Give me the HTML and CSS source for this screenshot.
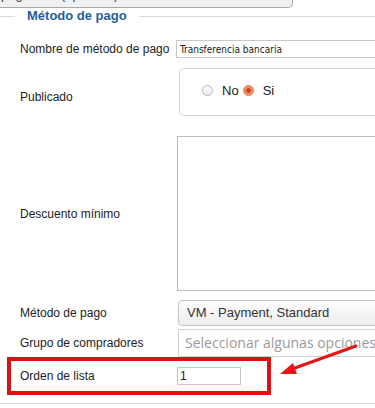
FILE: index.html
```html
<!DOCTYPE html>
<html lang="es">

<head>
    <meta charset="UTF-8">
    <meta name="viewport" content="width=device-width, initial-scale=1.0">
    <title>Método de pago</title>
    <link rel="stylesheet" href="styles.css">
</head>

<body>
    <div class="top-btn"><span>pago final (opcional)</span></div>

    <fieldset class="box">
        <legend>Método de pago</legend>

        <div class="row r-name">
            <label class="lbl">Nombre de método de pago</label>
            <input type="text" class="txt name" value="Transferencia bancaria">
        </div>

        <div class="row r-pub">
            <label class="lbl low">Publicado</label>
            <div class="radios">
                <span class="radio"></span><span class="opt">No</span>
                <span class="radio on"></span><span class="opt">Si</span>
            </div>
        </div>

        <div class="row r-desc">
            <label class="lbl">Descuento mínimo</label>
            <textarea class="area"></textarea>
        </div>

        <div class="row r-method">
            <label class="lbl">Método de pago</label>
            <div class="select">VM - Payment, Standard</div>
        </div>

        <div class="row r-group">
            <label class="lbl">Grupo de compradores</label>
            <div class="multi">Seleccionar algunas opciones</div>
        </div>

        <div class="row r-order">
            <label class="lbl">Orden de lista</label>
            <input type="text" class="txt order" value="1">
        </div>
    </fieldset>

    <!-- anotación -->
    <div class="mark"></div>
    <svg class="arrow" width="375" height="408" viewBox="0 0 375 408">
        <line x1="356" y1="346" x2="292" y2="369" stroke="#e21818" stroke-width="3" stroke-linecap="round" />
        <polygon points="280,374 293,363 297,374" fill="#e21818" />
    </svg>
</body>

</html>
```

FILE: styles.css
```css
body {
    margin: 0;
    width: 375px;
    height: 408px;
    overflow: hidden;
    position: relative;
    font-family: "Liberation Sans", Arial, sans-serif;
    color: #333;
    background: #fff;
}

.top-btn {
    width: 292px;
    height: 7px;
    overflow: hidden;
    background: #f0f0f0;
    border: 1px solid #a9a9a9;
    border-top: none;
    border-left: none;
    border-radius: 0 0 5px 0;
    font-size: 13px;
    line-height: 15px;
    color: #444;
}
.top-btn span {
    display: block;
    margin-top: -13px;
    padding-left: 1px;
}

.box {
    margin: 0;
    padding: 0 0 0 20px;
    border: none;
    border-top: 1px solid #dcdcdc;
    border-bottom: 1px solid #dcdcdc;
    width: 600px;
}
.box legend {
    margin-left: -5px;
    padding: 0 12px;
    font-size: 13px;
    line-height: 16px;
    font-weight: bold;
    color: #22609a;
}

.row {
    display: flex;
    align-items: center;
}
.r-name {
    margin: 16px 0 10px;
}
.r-pub {
    margin-bottom: 20px;
}
.r-desc {
    margin-bottom: 9px;
}
.r-method {
    margin-bottom: 3px;
}
.r-group {
    margin-bottom: 10px;
}
.r-order {
    margin-bottom: 18px;
}

.lbl {
    width: 156px;
    flex: none;
    font-size: 12px;
    color: #222;
}
.lbl.low {
    padding-top: 10px;
}

.txt {
    box-sizing: border-box;
    height: 18px;
    border: 1px solid #c8c8c8;
    padding: 0 3px;
    font-size: 12px;
    color: #222;
    outline: none;
}
.name {
    width: 260px;
    font-family: "DejaVu Sans Condensed", "Liberation Sans Narrow", sans-serif;
    font-size: 10px;
}
.order {
    width: 64px;
    margin-left: 1px;
    padding: 0 2px;
    font-family: "Liberation Sans", Arial, sans-serif;
}

.radios {
    box-sizing: border-box;
    width: 260px;
    height: 48px;
    margin-left: 3px;
    border: 1px solid #d4d4d4;
    border-radius: 5px;
    display: flex;
    align-items: center;
    padding: 0 0 4px 22px;
    font-size: 13px;
    color: #222;
}
.radio {
    box-sizing: border-box;
    width: 11px;
    height: 11px;
    border-radius: 50%;
    border: 1px solid #b5b5b5;
    background: linear-gradient(#fff, #ececec);
}
.radio.on {
    border-color: #e07a4a;
    background: radial-gradient(circle, #c4461c 0 2px, #f08a5c 2.5px, #f6a27e 100%);
}
.opt {
    margin: 0 4px 0 9px;
}

.area {
    box-sizing: border-box;
    width: 260px;
    height: 155px;
    margin: 0 0 0 1px;
    border: 1px solid #bbb;
    resize: none;
}

.select {
    box-sizing: border-box;
    width: 260px;
    height: 26px;
    margin-left: 2px;
    border: 1px solid #c4c4c4;
    border-radius: 4px;
    background: linear-gradient(#fdfdfd, #ededed);
    padding: 0 8px;
    font-size: 13px;
    line-height: 24px;
    color: #333;
}

.multi {
    box-sizing: border-box;
    width: 260px;
    height: 28px;
    margin-left: 2px;
    border: 1px solid #cfcfcf;
    padding: 0 6px;
    font-family: "Open Sans", sans-serif;
    font-size: 14px;
    line-height: 25px;
    color: #9a9a9a;
    white-space: nowrap;
}

.mark {
    position: absolute;
    left: 7px;
    top: 357px;
    width: 256px;
    height: 30px;
    border: 4px solid #e01010;
}

.arrow {
    position: absolute;
    left: 0;
    top: 0;
}
```
